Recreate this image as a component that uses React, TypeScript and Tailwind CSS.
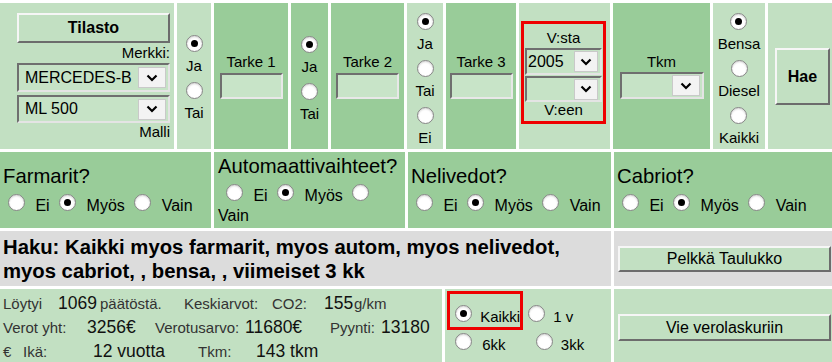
import React from 'react';

const light = 'bg-[#c2e0c2]';
const dark = 'bg-[#99cc99]';

function Radio({ on = false, className = '' }: { on?: boolean; className?: string }) {
  return (
    <span
      className={`relative inline-block h-[17px] w-[17px] rounded-full border border-[#858585] bg-white shadow-[inset_0_1px_2px_rgba(0,0,0,0.18)] ${className}`}
    >
      {on && <span className="absolute left-[4px] top-[4px] h-[7px] w-[7px] rounded-full bg-black" />}
    </span>
  );
}

function Chevron() {
  return (
    <svg width="12" height="8" viewBox="0 0 12 8">
      <polyline points="1.5,1.5 6,6 10.5,1.5" fill="none" stroke="#000" strokeWidth="2.2" />
    </svg>
  );
}

function Select({ value = '', className = '', btn = 'w-[26px]' }: { value?: string; className?: string; btn?: string }) {
  return (
    <div
      className={`flex items-center overflow-hidden border-2 border-t-[#6f6f6f] border-l-[#6f6f6f] border-r-[#e4e4e4] border-b-[#e4e4e4] bg-[#c6e3c6] text-[16px] ${className}`}
    >
      <span className="overflow-hidden whitespace-nowrap">{value}</span>
      <span className={`ml-auto mr-[2px] flex h-[21px] shrink-0 items-center justify-center border border-[#c9c9c9] bg-[#f3f3f3] ${btn}`}>
        <Chevron />
      </span>
    </div>
  );
}

function Btn({ children, className = '' }: { children: React.ReactNode; className?: string }) {
  return (
    <div
      className={`flex items-center justify-center border-2 border-t-[#f6f6f6] border-l-[#f6f6f6] border-r-[#6c6c6c] border-b-[#6c6c6c] bg-[#c2e0c2] ${className}`}
    >
      {children}
    </div>
  );
}

function Stack({ items }: { items: [string, boolean][] }) {
  return (
    <div className="flex flex-col items-center gap-[7px]">
      {items.map(([t, on]) => (
        <div key={t} className="flex flex-col items-center">
          <Radio on={on} />
          <div className="mt-[5px] leading-[18px]">{t}</div>
        </div>
      ))}
    </div>
  );
}

function Tarke({ label }: { label: string }) {
  return (
    <>
      <div className="leading-[18px]">{label}</div>
      <div className="mt-[2px] h-[26px] w-[63px] border-2 border-t-[#6f6f6f] border-l-[#6f6f6f] border-r-[#e8e8e8] border-b-[#e8e8e8] bg-[#c8e4c8]" />
    </>
  );
}

function Question({ label, className = '' }: { label: string; className?: string }) {
  return (
    <div className={`flex flex-col justify-center ${dark} ${className}`}>
      <div className="text-[20.3px] leading-[24px]">{label}</div>
      <div className="mt-[6px] whitespace-nowrap text-[16px] leading-[20px]">
        <Radio className="ml-[5px] mr-[6px]" /> Ei <Radio on className="ml-[5px] mr-[6px]" /> Myös{' '}
        <Radio className="ml-[5px] mr-[6px]" /> Vain
      </div>
    </div>
  );
}

function Seg({ w = '', big = false, children }: { w?: string; big?: boolean; children: React.ReactNode }) {
  return (
    <span className={`inline-block shrink-0 ${w} ${big ? 'text-[17.5px] text-[#111]' : 'text-[15px] text-[#333]'}`}>
      {children}
    </span>
  );
}

export default function App() {
  return (
    <div className="flex h-[362px] w-[832px] flex-col gap-[3px] overflow-hidden bg-white pt-[3px] font-['Liberation_Sans',Arial,sans-serif] text-[15px] text-black">
      {/* top search row */}
      <div className="flex h-[146px] shrink-0 gap-[3px]">
        <div className={`flex w-[174px] shrink-0 flex-col pl-[17px] pr-[4px] pt-[10px] ${light}`}>
          <Btn className="h-[30px] w-full text-[16px] font-bold">Tilasto</Btn>
          <div className="mt-[1px] text-right leading-[18px]">Merkki:</div>
          <Select value="MERCEDES-B" className="mt-[1px] h-[29px] w-full pl-[6px]" btn="w-[28px]" />
          <Select value="ML 500" className="mt-[3px] h-[28px] w-full pl-[6px]" btn="w-[28px]" />
          <div className="text-right leading-[18px]">Malli</div>
        </div>
        <div className={`w-[34px] shrink-0 pt-[32px] ${light}`}>
          <Stack items={[['Ja', true], ['Tai', false]]} />
        </div>
        <div className={`flex w-[74px] shrink-0 flex-col items-center pt-[50px] ${dark}`}>
          <Tarke label="Tarke 1" />
        </div>
        <div className={`w-[37px] shrink-0 pt-[33px] ${dark}`}>
          <Stack items={[['Ja', true], ['Tai', false]]} />
        </div>
        <div className={`flex w-[73px] shrink-0 flex-col items-center pt-[50px] ${dark}`}>
          <Tarke label="Tarke 2" />
        </div>
        <div className={`w-[36px] shrink-0 pt-[10px] ${light}`}>
          <Stack items={[['Ja', true], ['Tai', false], ['Ei', false]]} />
        </div>
        <div className={`flex w-[70px] shrink-0 flex-col items-center pt-[50px] ${dark}`}>
          <Tarke label="Tarke 3" />
        </div>
        <div className={`w-[91px] shrink-0 pl-[2px] pt-[18px] ${light}`}>
          <div className="flex w-[85px] flex-col items-center border-[3px] border-[#ee0000] pb-[3px] pt-[5px]">
            <div className="leading-[18px]">V:sta</div>
            <Select value="2005" className="mt-[1px] h-[27px] w-[77px] pl-[1px]" btn="w-[24px]" />
            <Select className="mt-[1px] h-[26px] w-[77px]" btn="w-[24px]" />
            <div className="leading-[16px]">V:een</div>
          </div>
        </div>
        <div className={`flex w-[97px] shrink-0 flex-col items-center pt-[50px] ${dark}`}>
          <div className="leading-[18px]">Tkm</div>
          <Select className="mt-[1px] h-[27px] w-[84px]" btn="w-[28px]" />
        </div>
        <div className={`w-[52px] shrink-0 pt-[10px] ${light}`}>
          <Stack items={[['Bensa', true], ['Diesel', false], ['Kaikki', false]]} />
        </div>
        <div className={`flex-1 pl-[7px] pt-[45px] ${light}`}>
          <Btn className="h-[57px] w-[55px] text-[16px] font-bold">Hae</Btn>
        </div>
      </div>

      {/* body type questions */}
      <div className="flex h-[76px] shrink-0 gap-[3px]">
        <Question label="Farmarit?" className="w-[211px] shrink-0 pl-[3px]" />
        <div className={`flex w-[191px] shrink-0 flex-col justify-center pl-[4px] ${dark}`}>
          <div className="text-[20.3px] leading-[24px]">Automaattivaihteet?</div>
          <div className="mt-[6px] whitespace-nowrap text-[16px] leading-[20px]">
            <Radio className="ml-[8px] mr-[6px]" /> Ei <Radio on className="ml-[5px] mr-[6px]" /> Myös{' '}
            <Radio className="ml-[5px] mr-[6px]" />
          </div>
          <div className="text-[16px] leading-[20px]">Vain</div>
        </div>
        <Question label="Nelivedot?" className="w-[203px] shrink-0 pl-[3px]" />
        <Question label="Cabriot?" className="flex-1 pl-[3px]" />
      </div>

      {/* search summary */}
      <div className="flex h-[55px] shrink-0 gap-[3px]">
        <div className="flex w-[611px] shrink-0 flex-col justify-center bg-[#dcdcdc] pl-[3px] text-[20.3px] font-bold leading-[24px]">
          <div className="whitespace-nowrap">Haku: Kaikki myos farmarit, myos autom, myos nelivedot,</div>
          <div className="whitespace-nowrap">myos cabriot, , bensa, , viimeiset 3 kk</div>
        </div>
        <div className="flex flex-1 items-center bg-[#dcdcdc] pl-[4px]">
          <Btn className="h-[26px] w-[213px] text-[16px]">Pelkkä Taulukko</Btn>
        </div>
      </div>

      {/* results */}
      <div className="flex h-[77px] shrink-0 gap-[3px]">
        <div className={`w-[442px] shrink-0 pl-[3px] pt-[2px] ${light}`}>
          <div className="flex h-[24px] items-baseline whitespace-nowrap leading-[24px]">
            <Seg w="w-[55px]">Löytyi</Seg>
            <Seg w="w-[42px]" big>1069</Seg>
            <Seg w="w-[84px]">päätöstä.</Seg>
            <Seg w="w-[88px]">Keskiarvot:</Seg>
            <Seg w="w-[52px]">CO2:</Seg>
            <Seg w="w-[30px]" big>155</Seg>
            <Seg>g/km</Seg>
          </div>
          <div className="flex h-[24px] items-baseline whitespace-nowrap leading-[24px]">
            <Seg w="w-[84px]">Verot yht:</Seg>
            <Seg w="w-[68px]" big>3256€</Seg>
            <Seg w="w-[90px]">Verotusarvo:</Seg>
            <Seg w="w-[85px]" big>11680€</Seg>
            <Seg w="w-[51px]">Pyynti:</Seg>
            <Seg big>13180</Seg>
          </div>
          <div className="flex h-[24px] items-baseline whitespace-nowrap leading-[24px]">
            <Seg w="w-[20px]">€</Seg>
            <Seg w="w-[70px]">Ikä:</Seg>
            <Seg w="w-[105px]" big>12 vuotta</Seg>
            <Seg w="w-[58px]">Tkm:</Seg>
            <Seg big>143 tkm</Seg>
          </div>
        </div>
        <div className={`w-[166px] shrink-0 pl-[2px] pt-[2px] text-[15px] ${light}`}>
          <div className="flex items-baseline">
            <div className="h-[39px] w-[76px] shrink-0 whitespace-nowrap border-[3px] border-[#ee0000] pl-[5px] pt-[11px] leading-[20px]">
              <Radio on className="mr-[4px]" /> Kaikki
            </div>
            <div className="ml-[5px] whitespace-nowrap leading-[20px]">
              <Radio className="mr-[4px]" /> 1 v
            </div>
          </div>
          <div className="mt-[3px] whitespace-nowrap leading-[20px]">
            <Radio className="ml-[8px] mr-[6px]" /> 6kk <Radio className="ml-[26px] mr-[4px]" /> 3kk
          </div>
        </div>
        <div className={`flex flex-1 items-center pl-[4px] ${light}`}>
          <Btn className="h-[27px] w-[213px] text-[16px]">Vie verolaskuriin</Btn>
        </div>
      </div>
    </div>
  );
}
